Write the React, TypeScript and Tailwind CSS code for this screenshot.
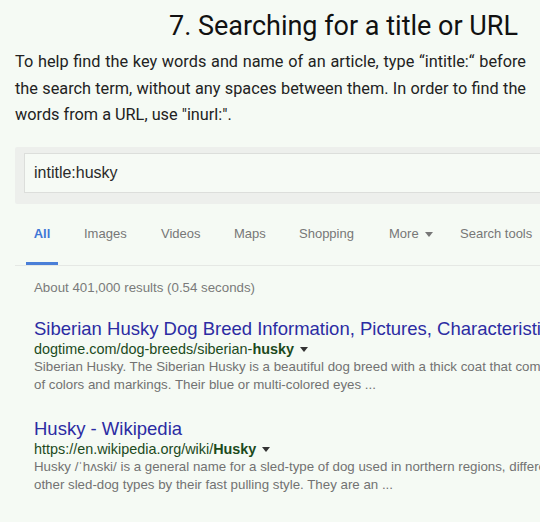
const Caret = () => (
  <svg width="8" height="5" viewBox="0 0 8 5" className="inline-block ml-1.5 align-middle">
    <path d="M0 0h8L4 5z" fill="currentColor" />
  </svg>
);

// tab widths are measured from where one label starts to where the next starts
const tabs = [
  { label: 'Images', w: 'w-[77px] ml-[26px]' },
  { label: 'Videos', w: 'w-[73px]' },
  { label: 'Maps', w: 'w-[65px]' },
  { label: 'Shopping', w: 'w-[90px]' },
  { label: 'More', w: 'w-[71px]' },
  { label: 'Search tools', w: 'w-[90px]' },
];

interface ResultProps {
  title: string;
  url: string;
  bold: string;
  lines: string[];
}

const Result = ({ title, url, bold, lines }: ResultProps) => (
  <div className="whitespace-nowrap">
    <div className="text-[18.5px] leading-[20px] text-[#2c2ca3]">{title}</div>
    <div className="text-[14.4px] leading-[18px] text-[#1c4a1c] mt-[1px]">
      {url}
      <b>{bold}</b>
      <span className="text-[#333]"><Caret /></span>
    </div>
    {lines.map((l, i) => (
      <div key={i} className="text-[13.3px] leading-[18px] text-[#727272]">
        {l}
      </div>
    ))}
  </div>
);

export default function App() {
  return (
    <div className="w-[540px] h-[522px] overflow-hidden bg-[#f5faf4]" style={{ fontFamily: 'Roboto, sans-serif' }}>
      <h1 className="text-right pr-[22px] pt-[9px] text-[27px] leading-[34px] text-[#111]">
        7. Searching for a title or URL
      </h1>
      <p className="pl-[15px] pr-[14px] pt-[6px] text-[16.3px] leading-[26.5px] text-[#222] text-justify">
        To help find the key words and name of an article, type “intitle:“ before the search term, without any spaces
        between them. In order to find the words from a URL, use "inurl:".
      </p>

      <div className="ml-[15px] mt-[18px]" style={{ fontFamily: '"Liberation Sans", Arial, sans-serif' }}>
        {/* search box */}
        <div className="bg-[#edefec] pl-[9px] pt-[6px] pb-[11px] rounded-l-[2px]">
          <div className="h-[40px] bg-[#f6faf5] border border-r-0 border-[#dcdedb] flex items-center pl-[9px] text-[16px] text-[#2a2a2a]">
            intitle:husky
          </div>
        </div>

        {/* tabs */}
        <div className="border-b border-[#e5e8e4] flex items-end h-[62px] pl-[11px] text-[13px] text-[#777] whitespace-nowrap">
          <div className="w-[32px] shrink-0 text-center pb-[18px] border-b-[3px] border-[#4a7fd8] text-[#3f76d6] font-bold">
            All
          </div>
          {tabs.map((t) => (
            <div key={t.label} className={`${t.w} shrink-0 pb-[21px]`}>
              {t.label}
              {t.label === 'More' && <Caret />}
            </div>
          ))}
        </div>

        <div className="pl-[19px] pt-[14px] whitespace-nowrap text-[13.3px] leading-[16px] text-[#7a7a7a]">
          About 401,000 results (0.54 seconds)
        </div>

        <div className="pl-[19px] pt-[23px] flex flex-col gap-[25px]">
          <Result
            title="Siberian Husky Dog Breed Information, Pictures, Characteristics & Facts"
            url="dogtime.com/dog-breeds/siberian-"
            bold="husky"
            lines={[
              'Siberian Husky. The Siberian Husky is a beautiful dog breed with a thick coat that comes in a multitude',
              'of colors and markings. Their blue or multi-colored eyes ...',
            ]}
          />
          <Result
            title="Husky - Wikipedia"
            url="https://en.wikipedia.org/wiki/"
            bold="Husky"
            lines={[
              'Husky /ˈhʌski/ is a general name for a sled-type of dog used in northern regions, differentiated from',
              'other sled-dog types by their fast pulling style. They are an ...',
            ]}
          />
        </div>
      </div>
    </div>
  );
}
